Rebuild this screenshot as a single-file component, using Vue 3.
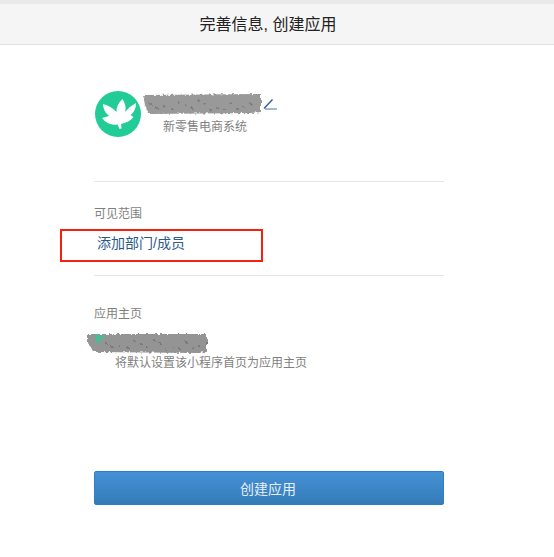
<script setup>
const dots = [[6,8],[20,11],[34,6],[47,12],[60,8],[73,12],[86,7],[99,11],[28,13],[54,5],[80,14],[12,12],[41,9],[66,14],[93,13],[107,8]]
</script>

<template>
  <div class="page">
    <header class="header"><span class="title">完善信息, 创建应用</span></header>
    <main class="form">
      <section class="app-head">
        <svg class="logo" viewBox="0 0 46 46" aria-hidden="true">
          <circle cx="23" cy="23" r="23" fill="#22cc96" />
          <path d="M27.500 8Q32 15 30 21 35 15 41 12 41 20 35.500 24L38.500 26Q35 31 26 33L26.500 37.500 24.500 38 22.500 33.500Q13 35 7 27L14 25Q8 20 8 13 16 15 21.500 21 21 14 27.500 8z" fill="#fff" />
        </svg>
        <div class="app-text">
          <div class="name-row">
            <svg class="scribble" viewBox="0 0 118 18" aria-hidden="true">
              <defs>
                <filter id="rough" x="-5%" y="-25%" width="110%" height="150%">
                  <feTurbulence type="fractalNoise" baseFrequency="0.35" numOctaves="2" seed="4" />
                  <feDisplacementMap in="SourceGraphic" scale="4" />
                </filter>
              </defs>
              <g filter="url(#rough)">
                <path d="M0 0 118 -1 118 17 108 18 6 19 2 10z" fill="#999" />
                <rect v-for="d in dots" :key="d[0]" :x="d[0]" :y="d[1]" width="3" height="2" fill="#808080" />
              </g>
            </svg>
            <svg class="pencil" viewBox="0 0 14 12" aria-hidden="true">
              <path d="M1 10.500 9.500 1.500" fill="none" stroke="#2f659e" stroke-width="1.500" />
              <path d="M2 11H14" fill="none" stroke="#7f9dbf" stroke-width="1.400" />
            </svg>
          </div>
          <p class="desc app-desc">新零售电商系统</p>
        </div>
      </section>

      <section class="block visible">
        <h2 class="label">可见范围</h2>
        <a class="add-link">添加部门/成员</a>
        <span class="highlight"></span>
      </section>

      <section class="block home">
        <h2 class="label">应用主页</h2>
        <svg class="scribble home-scribble" viewBox="0 0 118 18" aria-hidden="true">
          <g filter="url(#rough)">
            <path d="M-1 0 118 0 118 18 108 19 5 18 -1 9z" fill="#949494" />
            <path d="M6 1h9l2 2-5 1-1 6-3-1z" fill="#3fbf98" />
            <rect v-for="d in dots" :key="d[0]" :x="d[0] + 10" :y="d[1]" width="2" height="2" fill="#7a7a7a" />
          </g>
        </svg>
        <p class="desc home-desc">将默认设置该小程序首页为应用主页</p>
      </section>

      <button class="submit" type="button">创建应用</button>
    </main>
  </div>
</template>

<style scoped>
.page {
  width: 554px;
  height: 557px;
  overflow: hidden;
  background: #fff;
  box-sizing: border-box;
  border-top: 4px solid #e8e9eb;
  font-family: "Liberation Sans", "Noto Sans CJK SC", sans-serif;
}
.header {
  height: 41px;
  box-sizing: border-box;
  border-bottom: 1px solid #dfe1e4;
  padding-right: 18px;
  background: #f5f5f5;
  color: #222;
  font-size: 16px;
  line-height: 41px;
  text-align: center;
}
.form {
  width: 350px;
  margin-left: 94px;
  display: flex;
  flex-direction: column;
}
.app-head {
  display: flex;
  align-items: flex-start;
  height: 136px;
  padding-top: 46px;
  box-sizing: border-box;
}
.logo {
  width: 46px;
  height: 46px;
  margin-left: 1px;
  flex: none;
}
.app-text {
  margin-left: 2px;
}
.name-row {
  display: flex;
  align-items: flex-start;
  padding-top: 4px;
}
.scribble {
  display: block;
  width: 118px;
  height: 18px;
  overflow: visible;
  filter: blur(0.4px);
}
.pencil {
  width: 14px;
  height: 12px;
  margin: 3px 0 0 2px;
}
.desc {
  margin: 0;
  font-size: 12px;
  line-height: 18px;
  color: #7f7f7f;
}
.app-desc {
  margin: 5px 0 0 20px;
}
.block {
  position: relative;
  border-top: 1px solid #e4e6e9;
}
.visible {
  height: 94px;
  padding-top: 23px;
  box-sizing: border-box;
}
.home {
  height: 124px;
  padding-top: 29px;
  box-sizing: border-box;
}
.label {
  margin: 0;
  font-size: 12px;
  font-weight: 400;
  line-height: 18px;
  color: #7f7f7f;
}
.add-link {
  display: block;
  margin: 11px 0 0 3px;
  font-size: 14px;
  line-height: 18px;
  color: #2b5a88;
}
.highlight {
  position: absolute;
  left: -34px;
  top: 47px;
  width: 203px;
  height: 33px;
  box-sizing: border-box;
  border: 2px solid #f8200a;
}
.home-scribble {
  margin: 11px 0 0 -5px;
}
.home-desc {
  margin: 2px 0 0 21px;
}
.submit {
  width: 350px;
  height: 34px;
  margin-top: 72px;
  padding: 0 2px 0 0;
  border: 1px solid #2a80c4;
  border-radius: 2px;
  background: linear-gradient(#4690d6, #347cb8);
  color: #e6eef7;
  font: 14px "Liberation Sans", "Noto Sans CJK SC", sans-serif;
}
</style>
